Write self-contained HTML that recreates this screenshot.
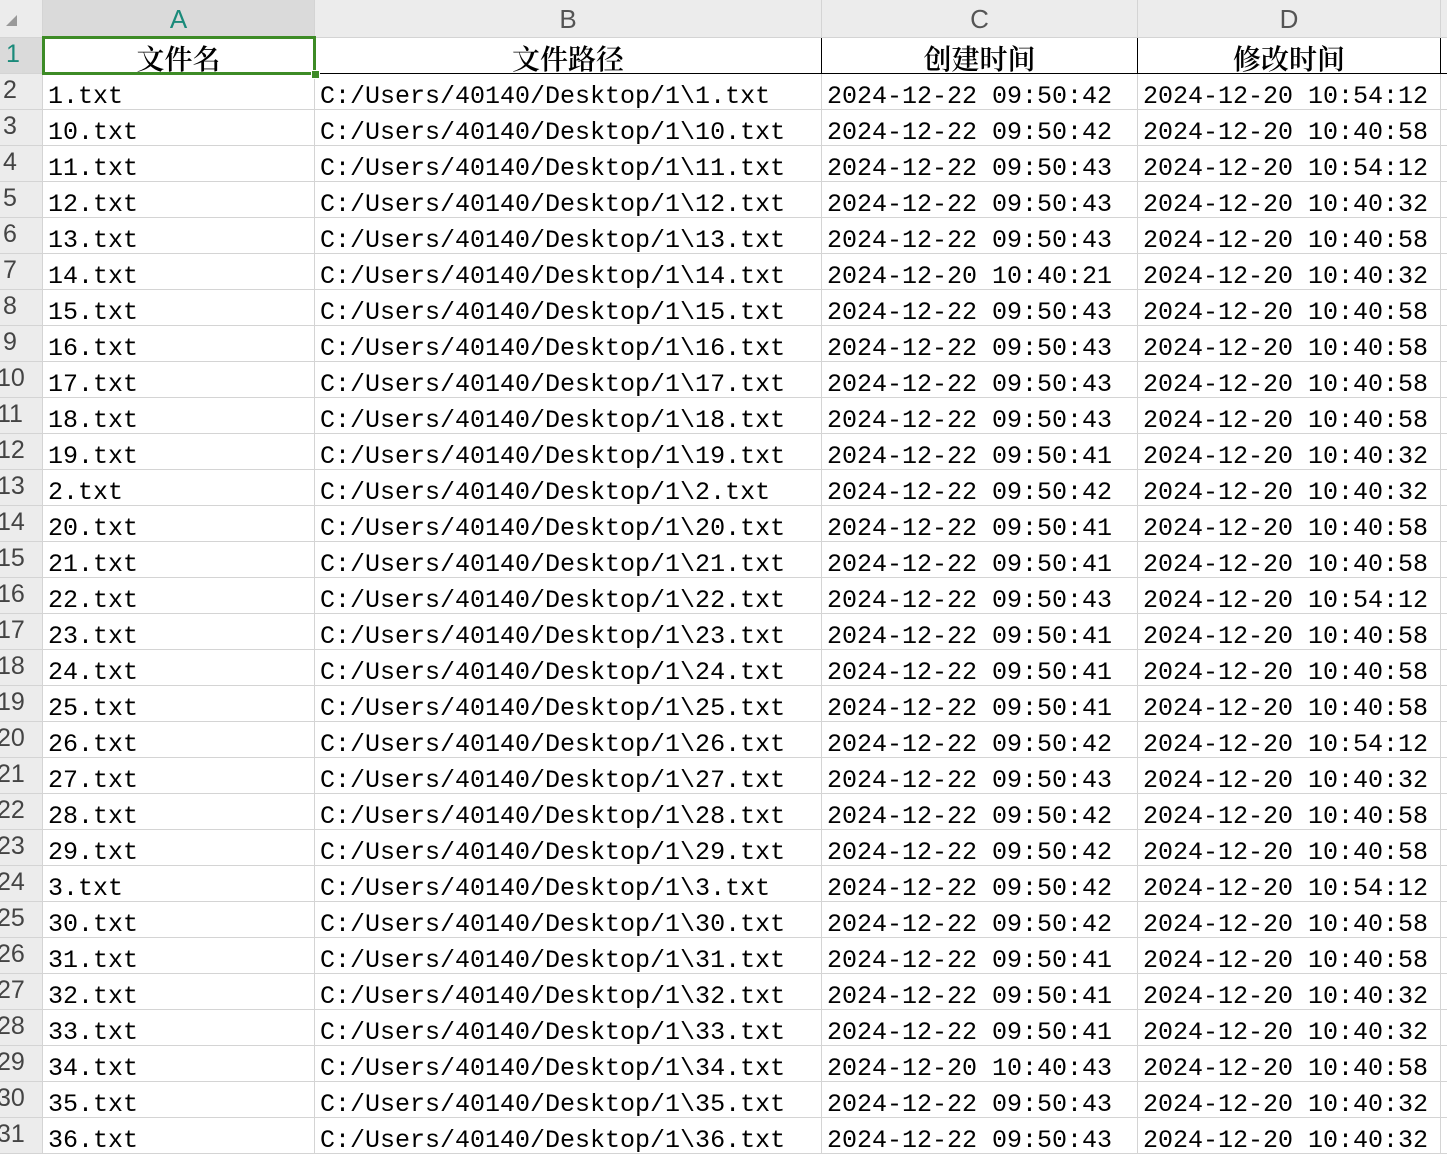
<!DOCTYPE html>
<html><head><meta charset="utf-8"><style>
body{margin:0;width:1447px;height:1141px;overflow:hidden;background:#fff;position:relative;font-family:"Liberation Mono","Noto Sans CJK SC",monospace}
.ch{position:absolute;top:0;height:38px;background:#ececec;border-right:1px solid #d4d4d4;border-bottom:1px solid #d4d4d4;box-sizing:border-box;text-align:center;font:26px/38px "Liberation Sans",sans-serif;color:#555}
.rh{position:absolute;left:0;width:43px;height:36px;background:#ececec;border-bottom:1px solid #d4d4d4;border-right:1px solid #d4d4d4;box-sizing:border-box;font:25px/36px "Liberation Sans",sans-serif;color:#444;overflow:hidden}
.rh span{position:absolute;top:-2px}
.row{position:absolute;left:43px;height:36px;width:1404px;border-bottom:1px solid #d4d4d4;box-sizing:border-box}
.c{position:absolute;top:0;height:35px;border-right:1px solid #d4d4d4;box-sizing:border-box;font-size:25px;line-height:40px;padding-top:3px;color:#000;white-space:nowrap;padding-left:5px;overflow:hidden}
.a{left:0;width:272px}.b{left:272px;width:507px}.cc{left:779px;width:316px}.d{left:1095px;width:303px}
.h .c{font:600 28px/40px "Noto Serif CJK SC","Liberation Serif",serif;text-align:center;padding:0;border-right:1px solid #000}
</style></head><body>
<div class="ch" style="left:0;width:43px"><div style="position:absolute;left:6px;top:15px;width:0;height:0;border-left:11px solid transparent;border-bottom:11px solid #999"></div></div>
<div class="ch" style="left:43px;width:272px;background:#dadada;color:#1a8a7a">A</div>
<div class="ch" style="left:315px;width:507px">B</div>
<div class="ch" style="left:822px;width:316px">C</div>
<div class="ch" style="left:1138px;width:303px">D</div>
<div class="ch" style="left:1441px;width:10px"></div>
<div id="g"></div>
<script>
var d=[["1","42","2024-12-20 10:54:12"],["10","42","10:40:58"],["11","43","10:54:12"],["12","43","10:40:32"],["13","43","10:40:58"],["14","X10:40:21","10:40:32"],["15","43","10:40:58"],["16","43","10:40:58"],["17","43","10:40:58"],["18","43","10:40:58"],["19","41","10:40:32"],["2","42","10:40:32"],["20","41","10:40:58"],["21","41","10:40:58"],["22","43","10:54:12"],["23","41","10:40:58"],["24","41","10:40:58"],["25","41","10:40:58"],["26","42","10:54:12"],["27","43","10:40:32"],["28","42","10:40:58"],["29","42","10:40:58"],["3","42","10:54:12"],["30","42","10:40:58"],["31","41","10:40:58"],["32","41","10:40:32"],["33","41","10:40:32"],["34","X10:40:43","10:40:58"],["35","43","10:40:32"],["36","43","10:40:32"]];
var h='';
h+='<div class="rh" style="top:38px;height:36px;background:#dadada;color:#1a8a7a"><span style="left:6px">1</span></div>';
h+='<div class="row h" style="top:38px;height:36px;border-bottom:1px solid #000"><div class="c a">文件名</div><div class="c b">文件路径</div><div class="c cc">创建时间</div><div class="c d">修改时间</div></div>';
for(var i=0;i<d.length;i++){var r=i+2,t=74+i*36,x=d[i];
var cr=x[1][0]=='X'?'2024-12-20 '+x[1].slice(1):'2024-12-22 09:50:'+x[1];
var md=x[2].length>8?x[2]:'2024-12-20 '+x[2];
h+='<div class="rh" style="top:'+t+'px"><span style="left:'+(r<10?3:-3)+'px">'+r+'</span></div>';
h+='<div class="row" style="top:'+t+'px"><div class="c a">'+x[0]+'.txt</div><div class="c b">C:/Users/40140/Desktop/1\\'+x[0]+'.txt</div><div class="c cc">'+cr+'</div><div class="c d">'+md+'</div></div>';}
h+='<div style="position:absolute;left:42px;top:36px;width:274px;height:39px;border:3px solid #3d8b26;box-sizing:border-box"></div><div style="position:absolute;left:311px;top:70px;width:7px;height:7px;background:#3d8b26;border:1px solid #fff"></div>';
document.getElementById('g').innerHTML=h;
</script>
</body></html>
